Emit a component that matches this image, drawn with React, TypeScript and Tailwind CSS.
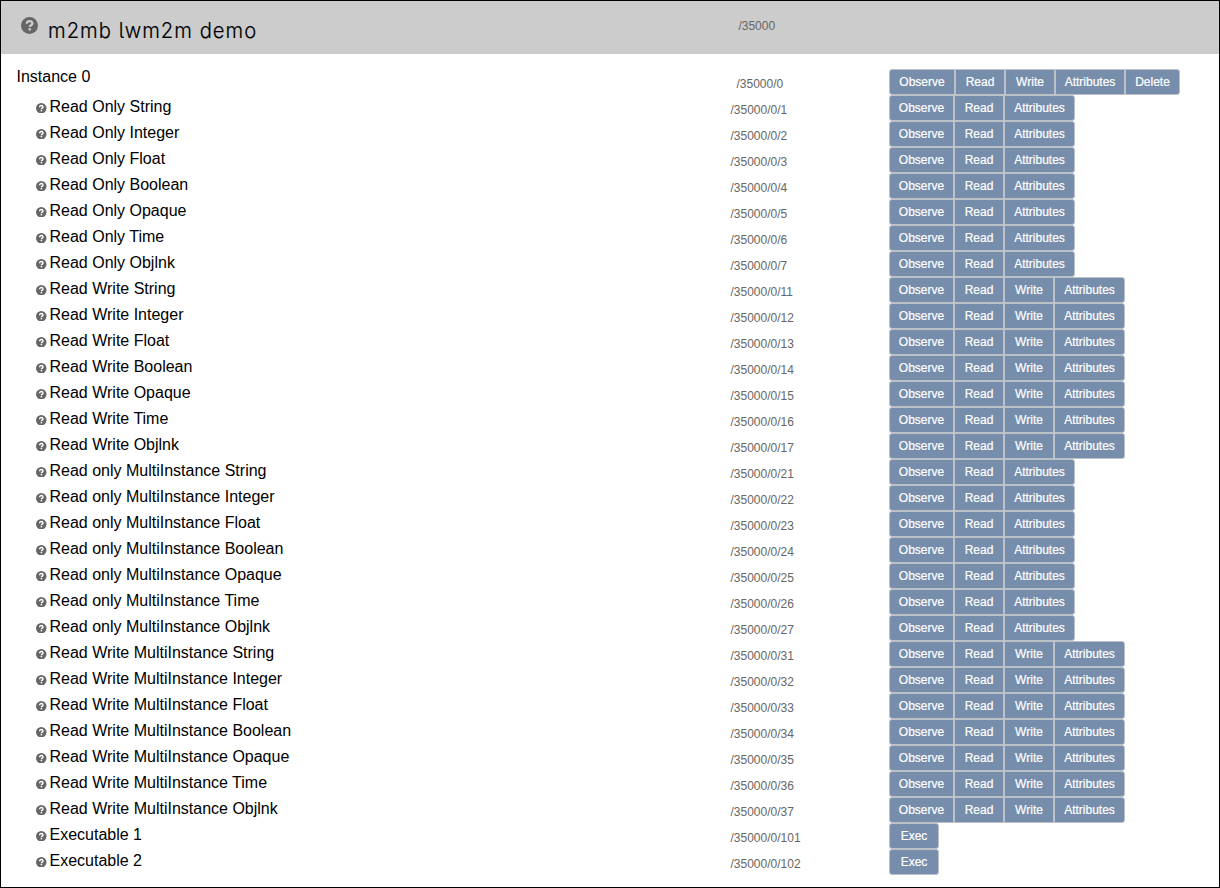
const RO = ["Observe", "Read", "Attributes"];
const RW = ["Observe", "Read", "Write", "Attributes"];
const EX = ["Exec"];

const types = ["String", "Integer", "Float", "Boolean", "Opaque", "Time", "Objlnk"];

type Resource = { name: string; id: number; actions: string[] };

const series = (prefix: string, start: number, actions: string[]): Resource[] =>
  types.map((t, i) => ({ name: `${prefix} ${t}`, id: start + i, actions }));

const resources: Resource[] = [
  ...series("Read Only", 1, RO),
  ...series("Read Write", 11, RW),
  ...series("Read only MultiInstance", 21, RO),
  ...series("Read Write MultiInstance", 31, RW),
  { name: "Executable 1", id: 101, actions: EX },
  { name: "Executable 2", id: 102, actions: EX },
];

const widths: Record<string, string> = {
  Observe: "w-[65px]",
  Read: "w-[50px]",
  Write: "w-[50px]",
  Attributes: "w-[71px]",
  Delete: "w-[55px]",
  Exec: "w-[50px]",
};

const headWidths: Record<string, string> = {
  ...widths,
  Observe: "w-[66px]",
  Attributes: "w-[70px]",
};

function Help({ className }: { className: string }) {
  return (
    <svg viewBox="0 0 16 16" className={className} aria-hidden="true">
      <circle cx="8" cy="8" r="8" fill="#666" />
      <path
        d="M5.5 6.3C5.5 4.6 6.6 3.8 8.1 3.8s2.6.8 2.6 2.3c0 1.7-2.4 1.7-2.4 3.3"
        fill="none"
        stroke="currentColor"
        strokeWidth="2.1"
      />
      <rect x="7.1" y="10.5" width="2.3" height="2.2" fill="currentColor" />
    </svg>
  );
}

function Buttons({ actions, head = false }: { actions: string[]; head?: boolean }) {
  return (
    <div className="flex h-[26px]">
      {actions.map((a) => (
        <button
          key={a}
          className={`${(head ? headWidths : widths)[a]} h-[26px] border border-[#bbc1c7] bg-[#768eac] p-0 text-center text-[12px] leading-[24px] text-white [-webkit-text-stroke:0.2px_white] first:rounded-l-[3px] last:rounded-r-[3px]`}
        >
          {a}
        </button>
      ))}
    </div>
  );
}

export default function App() {
  return (
    <div className="h-[888px] w-[1220px] overflow-hidden border border-black bg-white font-['Liberation_Sans',Arial,sans-serif] text-black">
      <header className="flex h-[53px] bg-[#ccc]">
        <Help className="mt-[15.5px] ml-[20px] size-[17px] shrink-0 text-[#ccc]" />
        <div className="ml-[10px] w-[690px] shrink-0 pt-[14px]">
          <h1 className="w-max origin-left scale-x-[0.92] font-['Inter',sans-serif] text-[22px] leading-[30px] font-light tracking-[1.1px] whitespace-nowrap [-webkit-text-stroke:0.2px_black] [font-feature-settings:'cv05']">
            m2mb lwm2m demo
          </h1>
        </div>
        <span className="mt-[17px] ml-[0.4px] text-[12px] leading-[16px] text-[#666]">/35000</span>
      </header>

      <main className="pt-[15px]">
        <div className="flex h-[26px]">
          <div className="w-[735px] shrink-0 pl-[15.5px] text-[16px] leading-[15px]">Instance 0</div>
          <div className="w-[153px] shrink-0 pt-[7px] pl-[0.5px] text-[12px] leading-[16px] text-[#666]">
            /35000/0
          </div>
          <Buttons actions={["Observe", "Read", "Write", "Attributes", "Delete"]} head />
        </div>
        {resources.map((r) => (
          <div key={r.id} className="flex h-[26px]">
            <div className="flex w-[729px] shrink-0 pl-[35.2px]">
              <Help className="mt-[7.5px] size-[10.5px] shrink-0 text-white" />
              <span className="ml-[2.8px] text-[16px] leading-[24px]">{r.name}</span>
            </div>
            <div className="w-[159px] shrink-0 pt-[7px] pl-[0.5px] text-[12px] leading-[16px] text-[#666]">
              /35000/0/{r.id}
            </div>
            <Buttons actions={r.actions} />
          </div>
        ))}
      </main>
    </div>
  );
}
